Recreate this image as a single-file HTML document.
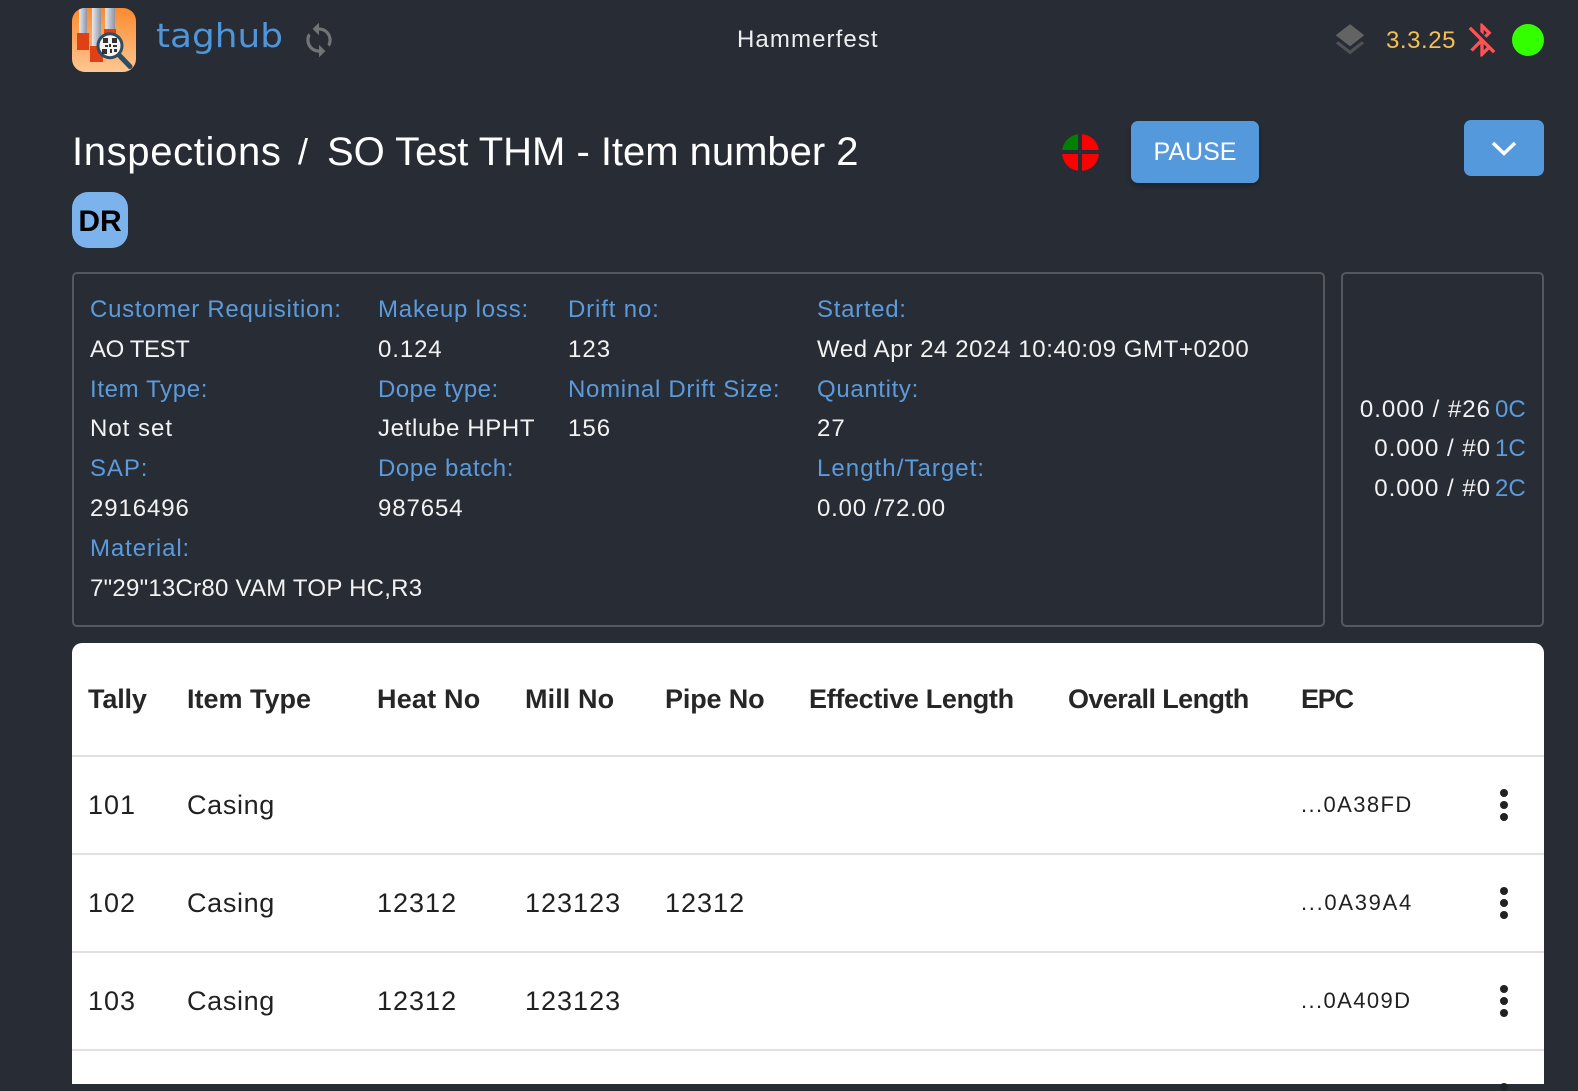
<!DOCTYPE html>
<html><head><meta charset="utf-8"><style>
html,body{margin:0;padding:0;background:#282c35;}
body{width:1578px;height:1084px;overflow:hidden;position:relative;font-family:"Liberation Sans",sans-serif;color:#fff;}
.t{position:absolute;white-space:nowrap;line-height:40px;font-size:24px;letter-spacing:.9px;}
.l{color:#5b9bdc;}
.v{color:#f2f2f2;}
.box{position:absolute;box-sizing:border-box;border:2px solid #55585c;border-radius:5px;}
.card{position:absolute;left:72px;top:643px;width:1472px;height:441px;background:#fff;border-radius:10px 10px 0 0;}
.line{position:absolute;left:72px;width:1472px;height:2px;background:#e0e0e0;}
.h{color:#262626;font-weight:bold;font-size:27px;letter-spacing:-0.1px;}
.c{color:#212121;font-size:27px;letter-spacing:1px;}
.e{color:#212121;font-size:22px;letter-spacing:1.4px;}
.dot{position:absolute;width:8px;height:8px;border-radius:50%;background:#212121;left:1500px;}
svg{position:absolute;}
</style></head><body>

<svg style="left:72px;top:8px" width="64" height="64" viewBox="0 0 64 64">
<defs><linearGradient id="g" x1="0" y1="0" x2="0" y2="1"><stop offset="0" stop-color="#fb8a2e"/><stop offset="1" stop-color="#fdc793"/></linearGradient>
<linearGradient id="p" x1="0" y1="0" x2="1" y2="0"><stop offset="0" stop-color="#e8e9ee"/><stop offset="1" stop-color="#8d94a3"/></linearGradient>
<clipPath id="r"><rect width="64" height="64" rx="13"/></clipPath></defs>
<g clip-path="url(#r)">
<rect width="64" height="64" fill="url(#g)"/>
<rect x="7" y="0" width="8" height="25" fill="url(#p)"/><rect x="5" y="25" width="12" height="17" fill="#df4016"/>
<rect x="20" y="0" width="9" height="38" fill="url(#p)"/><rect x="18" y="38" width="13" height="16" fill="#df4016"/>
<rect x="33" y="0" width="10" height="21" fill="url(#p)"/><rect x="32" y="21" width="12" height="12" fill="#df4016"/>
<path d="M47 47L58 58.500" stroke="#2e4d60" stroke-width="5" stroke-linecap="round"/>
<circle cx="38" cy="37.700" r="12" fill="#f4f4f4" stroke="#2e4d60" stroke-width="3"/>
<g fill="#333"><rect x="31" y="30" width="5" height="5"/><rect x="40" y="30" width="5" height="5"/><rect x="30" y="41" width="5" height="5"/><rect x="33" y="37" width="3" height="2"/><rect x="37" y="36" width="2" height="3"/><rect x="41" y="37" width="4" height="2"/><rect x="38" y="41" width="2" height="4"/><rect x="42" y="41" width="3" height="3"/></g>
</g></svg>

<svg style="left:150px;top:10px" width="145" height="56" viewBox="0 0 145 56"><text x="6" y="37" font-family="DejaVu Sans" font-size="33" fill="#4e96d9" textLength="127" lengthAdjust="spacingAndGlyphs">taghub</text></svg>

<svg style="left:300px;top:21px" width="38" height="38" viewBox="0 0 24 24" fill="#737476"><path d="M12 4V1L8 5l4 4V6c3.31 0 6 2.69 6 6 0 1.01-.25 1.97-.7 2.8l1.46 1.46C19.54 15.03 20 13.57 20 12c0-4.42-3.58-8-8-8zm0 14c-3.31 0-6-2.69-6-6 0-1.01.25-1.97.7-2.8L5.24 7.74C4.46 8.97 4 10.43 4 12c0 4.42 3.58 8 8 8v3l4-4-4-4v3z"/></svg>

<div class="t" style="left:737px;top:20px;color:#eee;letter-spacing:1.1px;">Hammerfest</div>

<svg style="left:1331px;top:21px" width="38" height="38" viewBox="0 0 24 24"><path fill="#4e5155" d="M11.99 18.54l-7.37-5.73L3 14.07l9 7 9-7-1.63-1.27-7.38 5.74z"/><path fill="#636363" d="M12 16l7.36-5.73L21 9l-9-7-9 7 1.63 1.27L12 16z"/></svg>
<div class="t" style="left:1386px;top:21px;color:#f2c055;letter-spacing:.55px;">3.3.25</div>
<svg style="left:1462px;top:20px" width="40" height="40" viewBox="0 0 24 24" fill="#ff5252"><path d="M13 5.83l1.88 1.88-1.6 1.6 1.41 1.41 3.02-3.02L12 2h-1v5.03l2 2v-3.2zM5.41 4L4 5.41 10.59 12 5 17.59 6.41 19 11 14.41V22h1l4.29-4.29 2.3 2.29L20 18.59 5.41 4zM13 18.17v-3.76l1.88 1.88L13 18.17z"/></svg>
<div style="position:absolute;left:1512px;top:24px;width:32px;height:32px;border-radius:50%;background:#33ff00;"></div>

<div class="t" style="left:72px;top:132px;font-size:40px;letter-spacing:.65px;">Inspections</div>
<div class="t" style="left:298px;top:132px;font-size:36px;letter-spacing:0;">/</div>
<div class="t" style="left:327px;top:132px;font-size:40px;letter-spacing:-.02px;">SO Test THM - Item number 2</div>

<svg style="left:1062px;top:133.500px" width="37" height="37" viewBox="0 0 37 37"><defs><clipPath id="ci"><circle cx="18.5" cy="18.5" r="18.5"/></clipPath></defs><g clip-path="url(#ci)"><rect x="0" y="0" width="16" height="16" fill="#008000"/><rect x="20" y="0" width="17" height="16" fill="#f00"/><rect x="0" y="20" width="16" height="17" fill="#f00"/><rect x="20" y="20" width="17" height="17" fill="#f00"/></g></svg>

<div style="position:absolute;left:1131px;top:121px;width:128px;height:62px;background:#5599dd;border-radius:7px;box-shadow:0 3px 5px rgba(0,0,0,.25);"></div>
<div class="t" style="left:1131px;top:132px;width:128px;text-align:center;letter-spacing:0;font-size:25px;">PAUSE</div>

<div style="position:absolute;left:1464px;top:120px;width:80px;height:56px;background:#5599dd;border-radius:7px;"></div>
<svg style="left:1490px;top:139px" width="28" height="20" viewBox="0 0 28 20"><path d="M3 4L14 14.500L25 4" fill="none" stroke="#fff" stroke-width="3.500"/></svg>

<div style="position:absolute;left:72px;top:192px;width:56px;height:56px;border-radius:16px;background:#7cb3ec;"></div>
<div class="t" style="left:72px;top:202px;width:56px;text-align:center;color:#000;font-weight:bold;font-size:30px;letter-spacing:0;">DR</div>

<div class="box" style="left:72px;top:272px;width:1253px;height:355px;"></div>
<div class="box" style="left:1341px;top:272px;width:203px;height:355px;"></div>

<div class="t l" style="left:90px;top:290px;letter-spacing:.74px;">Customer Requisition:</div>
<div class="t v" style="left:90px;top:330px;letter-spacing:-.4px;">AO TEST</div>
<div class="t l" style="left:90px;top:370px;letter-spacing:.65px;">Item Type:</div>
<div class="t v" style="left:90px;top:409px;letter-spacing:1px;">Not set</div>
<div class="t l" style="left:90px;top:449px;">SAP:</div>
<div class="t v" style="left:90px;top:489px;letter-spacing:.9px;">2916496</div>
<div class="t l" style="left:90px;top:529px;letter-spacing:.9px;">Material:</div>
<div class="t v" style="left:90px;top:569px;letter-spacing:.25px;">7"29"13Cr80 VAM TOP HC,R3</div>

<div class="t l" style="left:378px;top:290px;letter-spacing:.8px;">Makeup loss:</div>
<div class="t v" style="left:378px;top:330px;">0.124</div>
<div class="t l" style="left:378px;top:370px;letter-spacing:.45px;">Dope type:</div>
<div class="t v" style="left:378px;top:409px;letter-spacing:.65px;">Jetlube HPHT</div>
<div class="t l" style="left:378px;top:449px;letter-spacing:.6px;">Dope batch:</div>
<div class="t v" style="left:378px;top:489px;letter-spacing:.9px;">987654</div>

<div class="t l" style="left:568px;top:290px;letter-spacing:.85px;">Drift no:</div>
<div class="t v" style="left:568px;top:330px;letter-spacing:1px;">123</div>
<div class="t l" style="left:568px;top:370px;letter-spacing:.71px;">Nominal Drift Size:</div>
<div class="t v" style="left:568px;top:409px;letter-spacing:1px;">156</div>

<div class="t l" style="left:817px;top:290px;letter-spacing:.7px;">Started:</div>
<div class="t v" style="left:817px;top:330px;letter-spacing:.6px;">Wed Apr 24 2024 10:40:09 GMT+0200</div>
<div class="t l" style="left:817px;top:370px;letter-spacing:.65px;">Quantity:</div>
<div class="t v" style="left:817px;top:409px;letter-spacing:1px;">27</div>
<div class="t l" style="left:817px;top:449px;letter-spacing:1.05px;">Length/Target:</div>
<div class="t v" style="left:817px;top:489px;letter-spacing:.8px;">0.00 /72.00</div>

<div class="t v" style="right:87px;top:390px;letter-spacing:1px;">0.000 / #26</div><div class="t l" style="left:1495px;top:390px;letter-spacing:0;">0C</div>
<div class="t v" style="right:87px;top:429px;letter-spacing:1px;">0.000 / #0</div><div class="t l" style="left:1495px;top:429px;letter-spacing:0;">1C</div>
<div class="t v" style="right:87px;top:468.500px;letter-spacing:1px;">0.000 / #0</div><div class="t l" style="left:1495px;top:468.500px;letter-spacing:0;">2C</div>

<div class="card"></div>
<div class="line" style="top:755px"></div>
<div class="line" style="top:853px"></div>
<div class="line" style="top:951px"></div>
<div class="line" style="top:1049px"></div>

<div class="t h" style="left:88px;top:679px;letter-spacing:-.15px;">Tally</div>
<div class="t h" style="left:187px;top:679px;letter-spacing:0;">Item Type</div>
<div class="t h" style="left:377px;top:679px;letter-spacing:.2px;">Heat No</div>
<div class="t h" style="left:525px;top:679px;letter-spacing:.1px;">Mill No</div>
<div class="t h" style="left:665px;top:679px;letter-spacing:-.15px;">Pipe No</div>
<div class="t h" style="left:809px;top:679px;letter-spacing:-.33px;">Effective Length</div>
<div class="t h" style="left:1068px;top:679px;letter-spacing:-.6px;">Overall Length</div>
<div class="t h" style="left:1301px;top:679px;letter-spacing:-1.2px;">EPC</div>

<div class="t c" style="left:88px;top:784.500px;">101</div>
<div class="t c" style="left:187px;top:784.500px;letter-spacing:.65px;">Casing</div>
<div class="t e" style="left:1301px;top:785px;">...0A38FD</div>

<div class="t c" style="left:88px;top:882.500px;">102</div>
<div class="t c" style="left:187px;top:882.500px;letter-spacing:.65px;">Casing</div>
<div class="t c" style="left:377px;top:882.500px;">12312</div>
<div class="t c" style="left:525px;top:882.500px;">123123</div>
<div class="t c" style="left:665px;top:882.500px;">12312</div>
<div class="t e" style="left:1301px;top:883px;letter-spacing:1.7px;">...0A39A4</div>

<div class="t c" style="left:88px;top:980.500px;">103</div>
<div class="t c" style="left:187px;top:980.500px;letter-spacing:.65px;">Casing</div>
<div class="t c" style="left:377px;top:980.500px;">12312</div>
<div class="t c" style="left:525px;top:980.500px;">123123</div>
<div class="t e" style="left:1301px;top:981px;">...0A409D</div>

<div class="dot" style="top:789px"></div><div class="dot" style="top:801px"></div><div class="dot" style="top:813px"></div>
<div class="dot" style="top:887px"></div><div class="dot" style="top:899px"></div><div class="dot" style="top:911px"></div>
<div class="dot" style="top:985px"></div><div class="dot" style="top:997px"></div><div class="dot" style="top:1009px"></div>
<div class="dot" style="top:1083px"></div>
</body></html>
